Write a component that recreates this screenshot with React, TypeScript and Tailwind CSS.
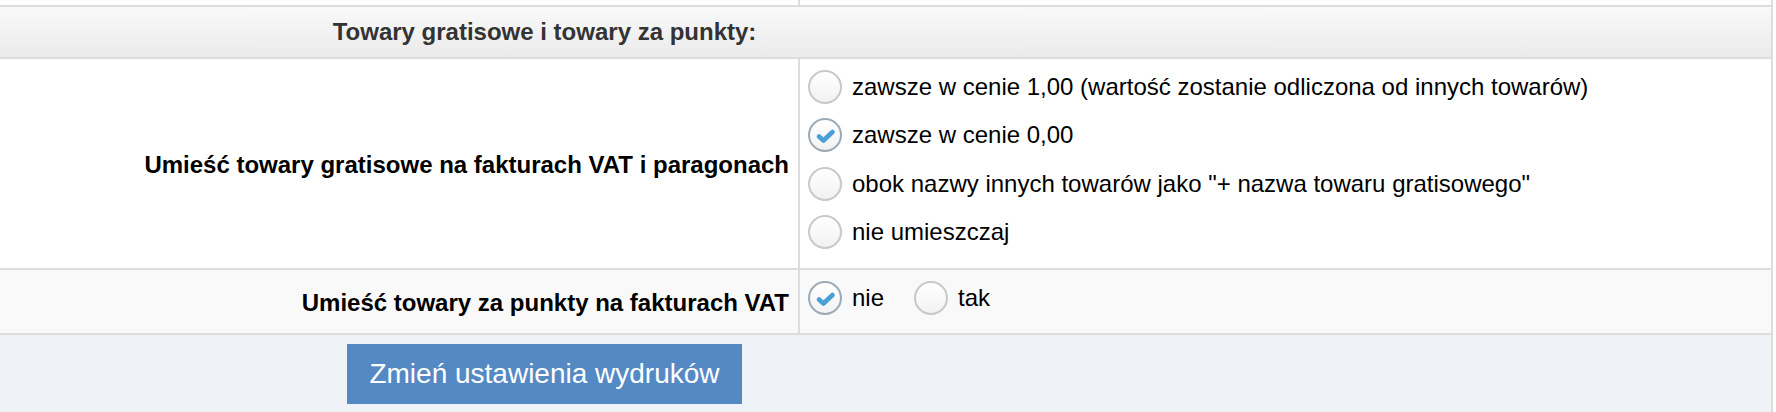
import React from "react";

const Radio = ({ checked }: { checked?: boolean }) => (
  <span
    className={
      "relative flex h-[34px] w-[34px] shrink-0 items-center justify-center rounded-full border-2 bg-gradient-to-b from-white to-[#f2f2f2] " +
      (checked ? "border-[#9eabb6]" : "border-[#c9c9c9]")
    }
  >
    {checked && (
      <svg width="30" height="30" viewBox="0 0 30 30" className="block">
        <path
          d="M9 16.5 L13.5 20.5 L22.5 12"
          fill="none"
          stroke="#4a9fd6"
          strokeWidth="4.6"
          strokeLinecap="round"
          strokeLinejoin="round"
        />
      </svg>
    )}
  </span>
);

const Option = ({ checked, label }: { checked?: boolean; label: string }) => (
  <div className="flex h-[48.3px] items-center gap-[10px]">
    <Radio checked={checked} />
    <span className="text-[24px] leading-none text-black">{label}</span>
  </div>
);

export default function App() {
  return (
    <div
      className="h-[412px] w-[1776px] overflow-hidden bg-white"
      style={{ fontFamily: '"Liberation Sans", Arial, Helvetica, sans-serif' }}
    >
      <div className="flex w-[1773px] flex-col border-r-2 border-[#dddddd]">
        {/* top strip */}
        <div className="flex h-[5px] bg-white">
          <div className="w-[800px] border-r-2 border-[#dddddd]" />
          <div className="flex-1" />
        </div>
        {/* header */}
        <div className="flex h-[54px] items-center border-y-2 border-[#dddddd] bg-gradient-to-b from-[#f9f9f9] to-[#ebebeb]">
          <div className="w-[1089px] text-center text-[24px] font-bold text-[#333333]">
            Towary gratisowe i towary za punkty:
          </div>
        </div>
        {/* row 1 */}
        <div className="flex h-[209px] bg-white">
          <div className="flex w-[800px] items-center justify-end border-r-2 border-[#dddddd] pr-[9px] pt-[2px] text-[24px] font-bold text-black">
            Umieść towary gratisowe na fakturach VAT i paragonach
          </div>
          <div className="flex flex-1 flex-col pl-[8px] pt-[4px]">
            <Option label="zawsze w cenie 1,00 (wartość zostanie odliczona od innych towarów)" />
            <Option checked label="zawsze w cenie 0,00" />
            <Option label={'obok nazwy innych towarów jako "+ nazwa towaru gratisowego"'} />
            <Option label="nie umieszczaj" />
          </div>
        </div>
        {/* row 2 */}
        <div className="flex h-[67px] border-y-2 border-[#dddddd] bg-[#f9f9f9]">
          <div className="flex w-[800px] items-center justify-end border-r-2 border-[#dddddd] pr-[9px] pt-[2px] text-[24px] font-bold text-black">
            Umieść towary za punkty na fakturach VAT
          </div>
          <div className="flex flex-1 items-start gap-[30px] pl-[8px] pt-[4px]">
            <Option checked label="nie" />
            <Option label="tak" />
          </div>
        </div>
        {/* bottom */}
        <div className="flex h-[77px] bg-[#eff2f7] pt-[9px]">
          <div className="flex w-[1089px] justify-center">
            <button className="flex h-[60px] items-center bg-[#5589c4] px-[22px] text-[28px] leading-none text-white">
              Zmień ustawienia wydruków
            </button>
          </div>
        </div>
      </div>
    </div>
  );
}
